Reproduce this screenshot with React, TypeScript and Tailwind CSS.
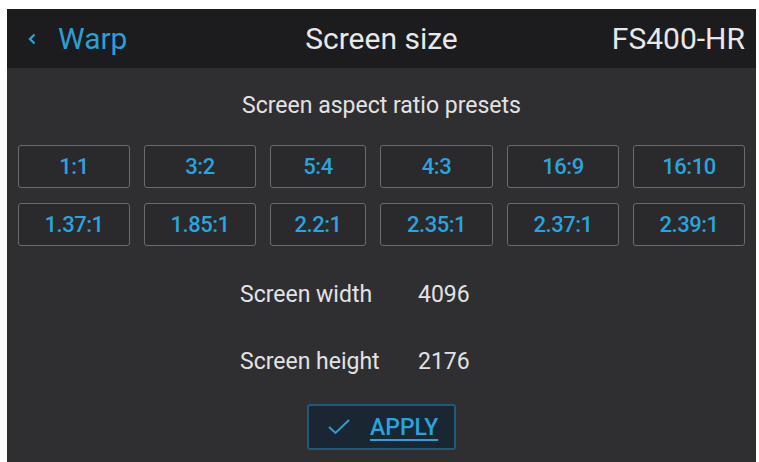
import React from "react";

const row1 = ["1:1", "3:2", "5:4", "4:3", "16:9", "16:10"];
const row2 = ["1.37:1", "1.85:1", "2.2:1", "2.35:1", "2.37:1", "2.39:1"];

function Preset({ label }: { label: string }) {
  return (
    <div className="h-[43px] flex items-center justify-center rounded-[3px] border-[1.5px] border-[#6b6a6d] bg-[#2a292c] text-[22px] font-medium text-[#2ba3dc] leading-none tracking-[-0.5px]">
      {label}
    </div>
  );
}

export default function App() {
  return (
    <div
      className="w-[759px] h-[462px] bg-white pt-[9px] pl-[7px] pr-[3px] overflow-hidden"
      style={{ fontFamily: "Roboto, 'Liberation Sans', sans-serif" }}
    >
      <div className="h-full flex flex-col bg-[#2f2e31]">
        <div className="h-[59px] shrink-0 bg-[#1c1b1d] grid grid-cols-[1fr_auto_1fr] items-center">
          <div className="flex items-center pl-[20px] text-[#2a9fd6]">
            <svg width="10" height="14" viewBox="0 0 10 14" className="mr-[21px]">
              <path d="M7.5 2.5 L3 7 L7.5 11.5" fill="none" stroke="#2a9fd6" strokeWidth="2.4" />
            </svg>
            <span className="text-[30px] leading-none">Warp</span>
          </div>
          <div className="text-[30px] leading-none text-[#e8e8ea]">Screen size</div>
          <div className="text-right pr-[11px] text-[30px] leading-none text-[#e8e8ea]">FS400-HR</div>
        </div>

        <div className="flex flex-col">
          <div className="pt-[24px] text-center text-[23px] leading-[28px] text-[#e2e2e4]">
            Screen aspect ratio presets
          </div>

          <div className="mt-[25px] pl-[11px] grid grid-cols-[112px_112px_96px_113px_112px_112px] gap-x-[14px] gap-y-[15px]">
            {row1.map((l) => (
              <Preset key={l} label={l} />
            ))}
            {row2.map((l) => (
              <Preset key={l} label={l} />
            ))}
          </div>

          <div className="mt-[35px] pl-[233px] grid grid-cols-[178px_auto] gap-y-[39px] text-[23px] leading-[28px] text-[#e2e2e4]">
            <span>Screen width</span>
            <span>4096</span>
            <span>Screen height</span>
            <span>2176</span>
          </div>

          <div className="mt-[28px] flex justify-center">
            <div className="w-[149px] h-[46px] flex items-center rounded-[3px] border-[2px] border-[#1f5a7a] bg-[#1a2733]">
              <svg width="24" height="18" viewBox="0 0 24 18" className="ml-[18px]">
                <path d="M2 9 L8.5 15 L22 2" fill="none" stroke="#2a9fd6" strokeWidth="2" />
              </svg>
              <span className="ml-[19px] text-[23px] font-medium leading-none text-[#2aa3dd] underline underline-offset-[4px] decoration-[2px]">
                APPLY
              </span>
            </div>
          </div>
        </div>
      </div>
    </div>
  );
}
